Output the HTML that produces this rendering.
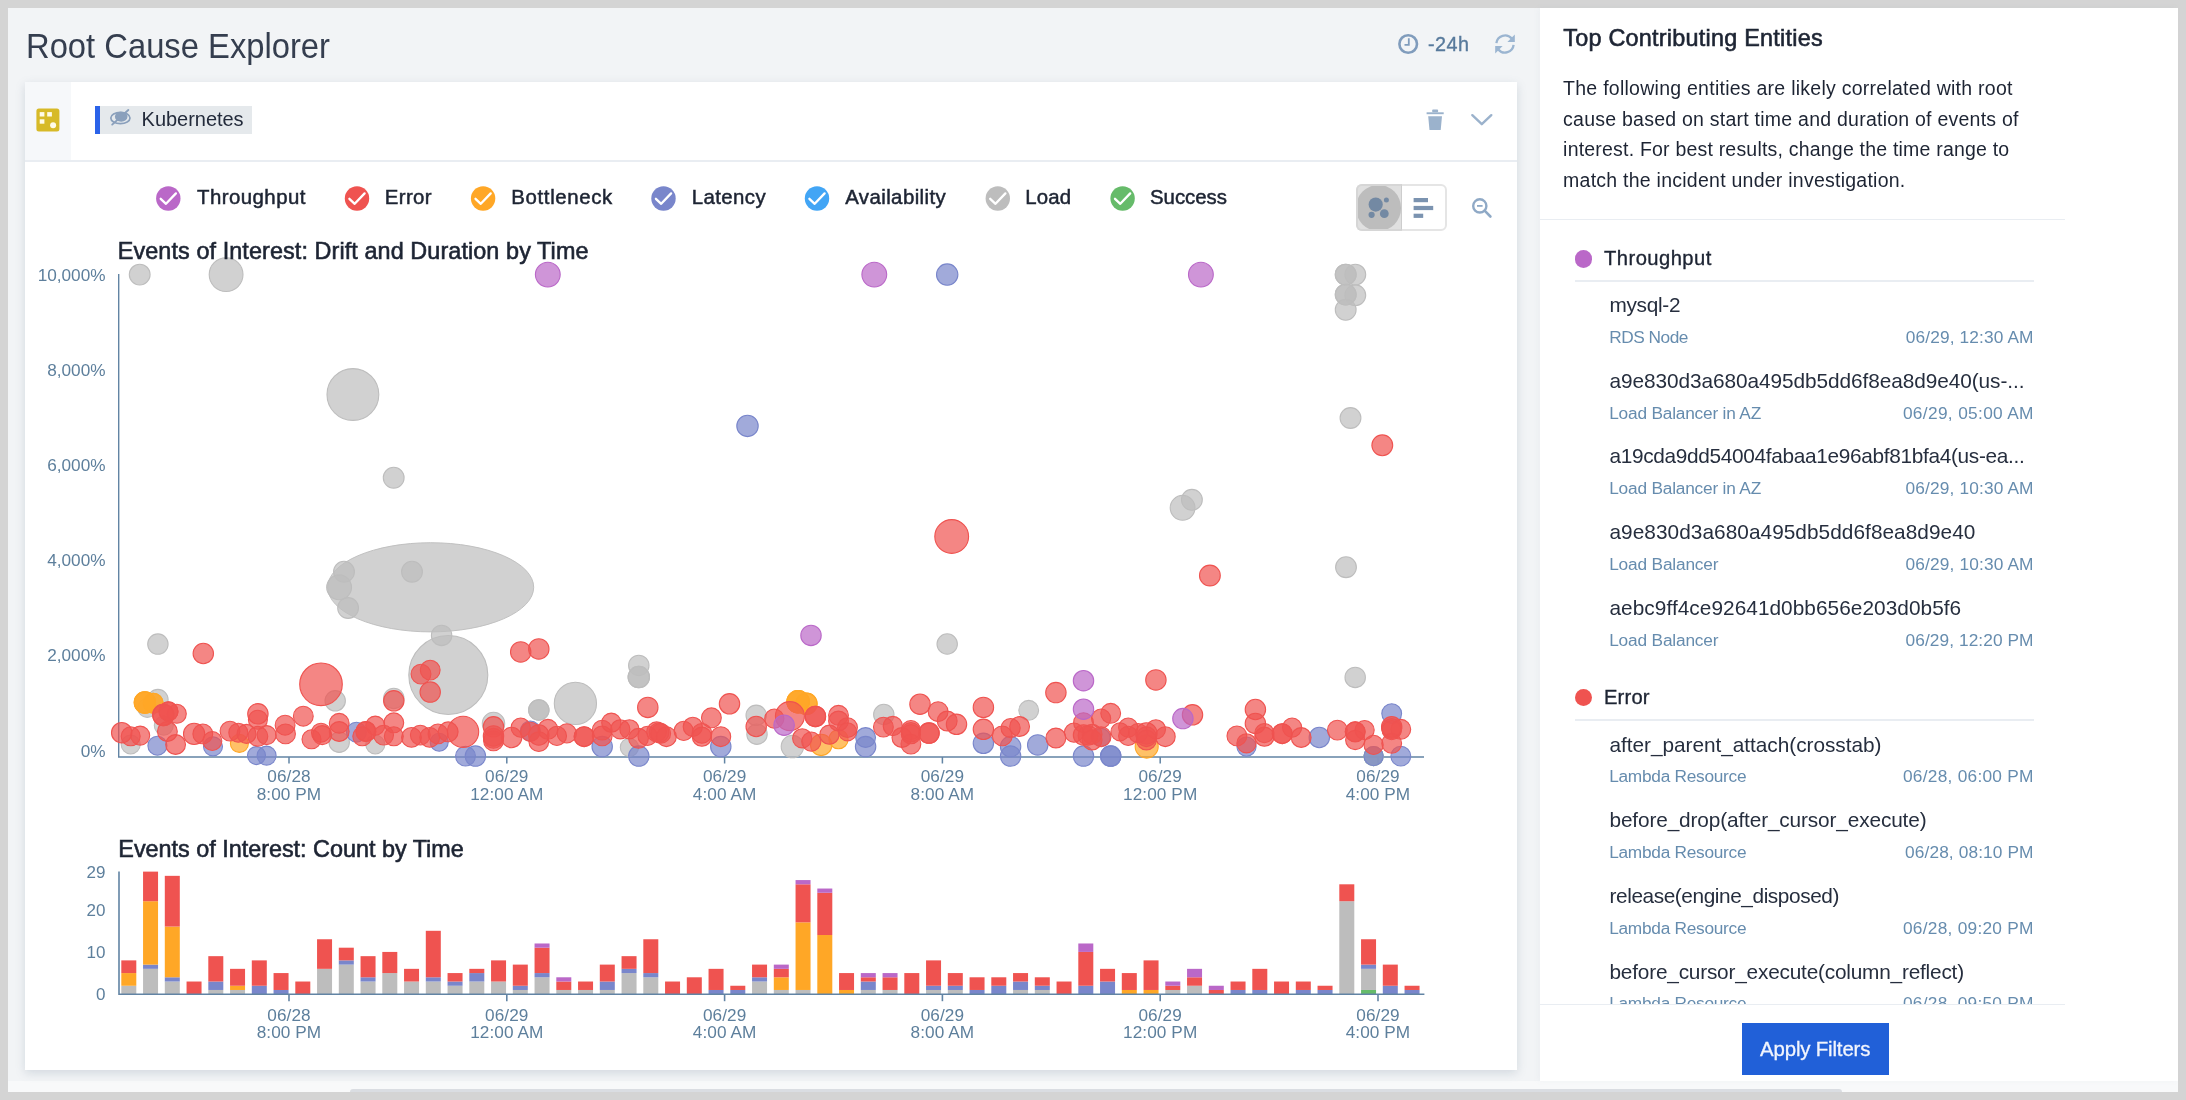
<!DOCTYPE html><html><head><meta charset="utf-8"><title>Root Cause Explorer</title><style>
html,body{margin:0;padding:0}
body{width:2186px;height:1100px;overflow:hidden;background:#d4d4d4;font-family:"Liberation Sans", sans-serif;position:relative}
.abs{position:absolute}
.t{position:absolute;white-space:pre;margin:0;padding:0}
#page{position:absolute;left:8px;top:8px;width:2170px;height:1073px;background:#f2f4f6;overflow:hidden}
#track{position:absolute;left:8px;top:1081px;width:2170px;height:11px;background:#f8f9fa}
</style></head><body>
<div id="layer" style="position:absolute;left:0;top:0;width:2186px;height:1100px;will-change:transform">
<div id="page"></div><div id="track"></div>
<div class="abs" style="left:25px;top:82px;width:1492px;height:987.7px;background:#fff;box-shadow:0 3px 9px rgba(110,130,150,0.24)"></div>
<div class="abs" style="left:25px;top:82px;width:46px;height:78px;background:#f6f8fa"></div>
<div class="abs" style="left:25px;top:159.5px;width:1492px;height:2px;background:#e9edf2"></div>
<div class="abs" style="left:94.6px;top:105.6px;width:157.3px;height:28.8px;background:#e5e9ec"></div>
<div class="abs" style="left:94.6px;top:105.6px;width:5.3px;height:28.8px;background:#2b63e9"></div>
<div class="abs" style="left:1540px;top:8px;width:638px;height:1072.5px;background:#fff;box-shadow:-2px 0 6px rgba(120,140,160,0.05)"></div>
<div class="abs" style="left:1540px;top:218.5px;width:525px;height:1.5px;background:#e9edf2"></div>
<div class="abs" style="left:1575px;top:279.6px;width:459px;height:2px;background:#e9edf2"></div>
<div class="abs" style="left:1575px;top:718.6px;width:459px;height:2px;background:#e9edf2"></div>
<div class="abs" style="left:1574.6px;top:250.2px;width:17.4px;height:17.4px;border-radius:50%;background:#ba68c8"></div>
<div class="abs" style="left:1574.6px;top:688.9px;width:17.4px;height:17.4px;border-radius:50%;background:#ef5350"></div>
<div class="abs" style="left:350px;top:1088.8px;width:1492px;height:3.2px;background:#dadde2;border-radius:4px 4px 0 0"></div>
<div class="abs" style="left:1355.5px;top:184.4px;width:91px;height:47px;box-sizing:border-box;border:2px solid #e5e5e5;border-radius:6px;background:#fff"></div>
<div class="abs" style="left:1355.5px;top:184.4px;width:46.5px;height:47px;box-sizing:border-box;border:2px solid #d6d6d6;border-right:1.5px solid #cdcdcd;border-radius:6px 0 0 6px;background:#e0e0e0;overflow:hidden"><div style="position:absolute;left:-1.7px;top:-1.2px;width:45.4px;height:45.4px;border-radius:50%;background:#bdbdbd"></div></div>
<svg class="abs" style="left:0;top:0" width="2186" height="1100" viewBox="0 0 2186 1100" font-family='"Liberation Sans", sans-serif'>
<path d="M118.7 274.1V757H1424" fill="none" stroke="#6284a4" stroke-width="1.4"/>
<path d="M289.0 757v6.5" stroke="#6284a4" stroke-width="1.5"/>
<path d="M506.8 757v6.5" stroke="#6284a4" stroke-width="1.5"/>
<path d="M724.6 757v6.5" stroke="#6284a4" stroke-width="1.5"/>
<path d="M942.4 757v6.5" stroke="#6284a4" stroke-width="1.5"/>
<path d="M1160.2 757v6.5" stroke="#6284a4" stroke-width="1.5"/>
<path d="M1378.0 757v6.5" stroke="#6284a4" stroke-width="1.5"/>
<text x="105.5" y="280.7" text-anchor="end" font-size="17.2" fill="#5d7f9c">10,000%</text>
<text x="105.5" y="375.7" text-anchor="end" font-size="17.2" fill="#5d7f9c">8,000%</text>
<text x="105.5" y="470.7" text-anchor="end" font-size="17.2" fill="#5d7f9c">6,000%</text>
<text x="105.5" y="565.7" text-anchor="end" font-size="17.2" fill="#5d7f9c">4,000%</text>
<text x="105.5" y="661.2" text-anchor="end" font-size="17.2" fill="#5d7f9c">2,000%</text>
<text x="105.5" y="756.7" text-anchor="end" font-size="17.2" fill="#5d7f9c">0%</text>
<text x="289.0" y="782.0" text-anchor="middle" font-size="17.2" letter-spacing="0.08" fill="#5d7f9c">06/28</text>
<text x="289.0" y="799.5" text-anchor="middle" font-size="17.2" letter-spacing="0.08" fill="#5d7f9c">8:00 PM</text>
<text x="289.0" y="1020.6" text-anchor="middle" font-size="17.2" letter-spacing="0.08" fill="#5d7f9c">06/28</text>
<text x="289.0" y="1037.7" text-anchor="middle" font-size="17.2" letter-spacing="0.08" fill="#5d7f9c">8:00 PM</text>
<text x="506.8" y="782.0" text-anchor="middle" font-size="17.2" letter-spacing="0.08" fill="#5d7f9c">06/29</text>
<text x="506.8" y="799.5" text-anchor="middle" font-size="17.2" letter-spacing="0.08" fill="#5d7f9c">12:00 AM</text>
<text x="506.8" y="1020.6" text-anchor="middle" font-size="17.2" letter-spacing="0.08" fill="#5d7f9c">06/29</text>
<text x="506.8" y="1037.7" text-anchor="middle" font-size="17.2" letter-spacing="0.08" fill="#5d7f9c">12:00 AM</text>
<text x="724.6" y="782.0" text-anchor="middle" font-size="17.2" letter-spacing="0.08" fill="#5d7f9c">06/29</text>
<text x="724.6" y="799.5" text-anchor="middle" font-size="17.2" letter-spacing="0.08" fill="#5d7f9c">4:00 AM</text>
<text x="724.6" y="1020.6" text-anchor="middle" font-size="17.2" letter-spacing="0.08" fill="#5d7f9c">06/29</text>
<text x="724.6" y="1037.7" text-anchor="middle" font-size="17.2" letter-spacing="0.08" fill="#5d7f9c">4:00 AM</text>
<text x="942.4" y="782.0" text-anchor="middle" font-size="17.2" letter-spacing="0.08" fill="#5d7f9c">06/29</text>
<text x="942.4" y="799.5" text-anchor="middle" font-size="17.2" letter-spacing="0.08" fill="#5d7f9c">8:00 AM</text>
<text x="942.4" y="1020.6" text-anchor="middle" font-size="17.2" letter-spacing="0.08" fill="#5d7f9c">06/29</text>
<text x="942.4" y="1037.7" text-anchor="middle" font-size="17.2" letter-spacing="0.08" fill="#5d7f9c">8:00 AM</text>
<text x="1160.2" y="782.0" text-anchor="middle" font-size="17.2" letter-spacing="0.08" fill="#5d7f9c">06/29</text>
<text x="1160.2" y="799.5" text-anchor="middle" font-size="17.2" letter-spacing="0.08" fill="#5d7f9c">12:00 PM</text>
<text x="1160.2" y="1020.6" text-anchor="middle" font-size="17.2" letter-spacing="0.08" fill="#5d7f9c">06/29</text>
<text x="1160.2" y="1037.7" text-anchor="middle" font-size="17.2" letter-spacing="0.08" fill="#5d7f9c">12:00 PM</text>
<text x="1378.0" y="782.0" text-anchor="middle" font-size="17.2" letter-spacing="0.08" fill="#5d7f9c">06/29</text>
<text x="1378.0" y="799.5" text-anchor="middle" font-size="17.2" letter-spacing="0.08" fill="#5d7f9c">4:00 PM</text>
<text x="1378.0" y="1020.6" text-anchor="middle" font-size="17.2" letter-spacing="0.08" fill="#5d7f9c">06/29</text>
<text x="1378.0" y="1037.7" text-anchor="middle" font-size="17.2" letter-spacing="0.08" fill="#5d7f9c">4:00 PM</text>
<circle cx="1373.6" cy="756.1" r="9.6" fill="#66bb6a" fill-opacity="0.7" stroke="#66bb6a" stroke-opacity="1.0" stroke-width="1.1"/>
<ellipse cx="430.7" cy="587.3" rx="103" ry="44.6" fill="#bdbdbd" fill-opacity="0.7" stroke="#bdbdbd" stroke-opacity="0.9"/>
<circle cx="448.3" cy="675.0" r="39.5" fill="#bdbdbd" fill-opacity="0.7" stroke="#bdbdbd" stroke-opacity="1.0" stroke-width="1.1"/>
<circle cx="157.9" cy="644.1" r="10.2" fill="#bdbdbd" fill-opacity="0.7" stroke="#bdbdbd" stroke-opacity="1.0" stroke-width="1.1"/>
<circle cx="157.9" cy="699.6" r="10.2" fill="#bdbdbd" fill-opacity="0.7" stroke="#bdbdbd" stroke-opacity="1.0" stroke-width="1.1"/>
<circle cx="147.3" cy="707.9" r="9.5" fill="#bdbdbd" fill-opacity="0.7" stroke="#bdbdbd" stroke-opacity="1.0" stroke-width="1.1"/>
<circle cx="130.7" cy="744.5" r="9.5" fill="#bdbdbd" fill-opacity="0.7" stroke="#bdbdbd" stroke-opacity="1.0" stroke-width="1.1"/>
<circle cx="335.2" cy="700.8" r="10.2" fill="#bdbdbd" fill-opacity="0.7" stroke="#bdbdbd" stroke-opacity="1.0" stroke-width="1.1"/>
<circle cx="339.2" cy="742.2" r="10.2" fill="#bdbdbd" fill-opacity="0.7" stroke="#bdbdbd" stroke-opacity="1.0" stroke-width="1.1"/>
<circle cx="375.3" cy="744.5" r="9.5" fill="#bdbdbd" fill-opacity="0.7" stroke="#bdbdbd" stroke-opacity="1.0" stroke-width="1.1"/>
<circle cx="393.8" cy="698.4" r="10.2" fill="#bdbdbd" fill-opacity="0.7" stroke="#bdbdbd" stroke-opacity="1.0" stroke-width="1.1"/>
<circle cx="163.8" cy="725.6" r="9.5" fill="#bdbdbd" fill-opacity="0.7" stroke="#bdbdbd" stroke-opacity="1.0" stroke-width="1.1"/>
<circle cx="441.6" cy="635.4" r="10.2" fill="#bdbdbd" fill-opacity="0.7" stroke="#bdbdbd" stroke-opacity="1.0" stroke-width="1.1"/>
<circle cx="493.5" cy="723.5" r="11.2" fill="#bdbdbd" fill-opacity="0.7" stroke="#bdbdbd" stroke-opacity="1.0" stroke-width="1.1"/>
<circle cx="538.8" cy="710.0" r="10.2" fill="#bdbdbd" fill-opacity="0.7" stroke="#bdbdbd" stroke-opacity="1.0" stroke-width="1.1"/>
<circle cx="575.4" cy="703.4" r="21.1" fill="#bdbdbd" fill-opacity="0.7" stroke="#bdbdbd" stroke-opacity="1.0" stroke-width="1.1"/>
<circle cx="638.8" cy="665.4" r="10.2" fill="#bdbdbd" fill-opacity="0.7" stroke="#bdbdbd" stroke-opacity="1.0" stroke-width="1.1"/>
<circle cx="638.8" cy="677.1" r="10.7" fill="#bdbdbd" fill-opacity="0.7" stroke="#bdbdbd" stroke-opacity="1.0" stroke-width="1.1"/>
<circle cx="629.4" cy="747.4" r="9.1" fill="#bdbdbd" fill-opacity="0.7" stroke="#bdbdbd" stroke-opacity="1.0" stroke-width="1.1"/>
<circle cx="756.2" cy="715.3" r="10.2" fill="#bdbdbd" fill-opacity="0.7" stroke="#bdbdbd" stroke-opacity="1.0" stroke-width="1.1"/>
<circle cx="757.0" cy="734.2" r="10.2" fill="#bdbdbd" fill-opacity="0.7" stroke="#bdbdbd" stroke-opacity="1.0" stroke-width="1.1"/>
<circle cx="947.2" cy="644.0" r="10.2" fill="#bdbdbd" fill-opacity="0.7" stroke="#bdbdbd" stroke-opacity="1.0" stroke-width="1.1"/>
<circle cx="883.8" cy="714.5" r="10.2" fill="#bdbdbd" fill-opacity="0.7" stroke="#bdbdbd" stroke-opacity="1.0" stroke-width="1.1"/>
<circle cx="1028.7" cy="710.3" r="9.9" fill="#bdbdbd" fill-opacity="0.7" stroke="#bdbdbd" stroke-opacity="1.0" stroke-width="1.1"/>
<circle cx="792.4" cy="746.6" r="11.2" fill="#bdbdbd" fill-opacity="0.7" stroke="#bdbdbd" stroke-opacity="1.0" stroke-width="1.1"/>
<circle cx="1355.2" cy="677.4" r="10.2" fill="#bdbdbd" fill-opacity="0.7" stroke="#bdbdbd" stroke-opacity="1.0" stroke-width="1.1"/>
<circle cx="1373.6" cy="756.1" r="9.6" fill="#bdbdbd" fill-opacity="0.7" stroke="#bdbdbd" stroke-opacity="1.0" stroke-width="1.1"/>
<circle cx="1345.7" cy="274.6" r="10.4" fill="#bdbdbd" fill-opacity="0.7" stroke="#bdbdbd" stroke-opacity="1.0" stroke-width="1.1"/>
<circle cx="1355.3" cy="274.6" r="10.4" fill="#bdbdbd" fill-opacity="0.7" stroke="#bdbdbd" stroke-opacity="1.0" stroke-width="1.1"/>
<circle cx="1345.7" cy="274.6" r="10.4" fill="#bdbdbd" fill-opacity="0.7" stroke="#bdbdbd" stroke-opacity="1.0" stroke-width="1.1"/>
<circle cx="1345.7" cy="294.6" r="10.4" fill="#bdbdbd" fill-opacity="0.7" stroke="#bdbdbd" stroke-opacity="1.0" stroke-width="1.1"/>
<circle cx="1355.3" cy="295.3" r="10.4" fill="#bdbdbd" fill-opacity="0.7" stroke="#bdbdbd" stroke-opacity="1.0" stroke-width="1.1"/>
<circle cx="1345.7" cy="294.6" r="10.4" fill="#bdbdbd" fill-opacity="0.7" stroke="#bdbdbd" stroke-opacity="1.0" stroke-width="1.1"/>
<circle cx="1345.7" cy="309.8" r="10.4" fill="#bdbdbd" fill-opacity="0.7" stroke="#bdbdbd" stroke-opacity="1.0" stroke-width="1.1"/>
<circle cx="1350.5" cy="418.0" r="10.4" fill="#bdbdbd" fill-opacity="0.7" stroke="#bdbdbd" stroke-opacity="1.0" stroke-width="1.1"/>
<circle cx="1191.9" cy="499.8" r="10.4" fill="#bdbdbd" fill-opacity="0.7" stroke="#bdbdbd" stroke-opacity="1.0" stroke-width="1.1"/>
<circle cx="1182.6" cy="507.8" r="12.4" fill="#bdbdbd" fill-opacity="0.7" stroke="#bdbdbd" stroke-opacity="1.0" stroke-width="1.1"/>
<circle cx="1346.0" cy="567.2" r="10.4" fill="#bdbdbd" fill-opacity="0.7" stroke="#bdbdbd" stroke-opacity="1.0" stroke-width="1.1"/>
<circle cx="139.7" cy="274.6" r="10.4" fill="#bdbdbd" fill-opacity="0.7" stroke="#bdbdbd" stroke-opacity="1.0" stroke-width="1.1"/>
<circle cx="226.1" cy="274.6" r="16.9" fill="#bdbdbd" fill-opacity="0.7" stroke="#bdbdbd" stroke-opacity="1.0" stroke-width="1.1"/>
<circle cx="352.9" cy="394.5" r="25.9" fill="#bdbdbd" fill-opacity="0.7" stroke="#bdbdbd" stroke-opacity="1.0" stroke-width="1.1"/>
<circle cx="393.7" cy="477.7" r="10.4" fill="#bdbdbd" fill-opacity="0.7" stroke="#bdbdbd" stroke-opacity="1.0" stroke-width="1.1"/>
<circle cx="344.0" cy="571.7" r="10.4" fill="#bdbdbd" fill-opacity="0.7" stroke="#bdbdbd" stroke-opacity="1.0" stroke-width="1.1"/>
<circle cx="339.1" cy="587.3" r="12.4" fill="#bdbdbd" fill-opacity="0.7" stroke="#bdbdbd" stroke-opacity="1.0" stroke-width="1.1"/>
<circle cx="348.1" cy="608.0" r="10.4" fill="#bdbdbd" fill-opacity="0.7" stroke="#bdbdbd" stroke-opacity="1.0" stroke-width="1.1"/>
<circle cx="412.0" cy="571.7" r="10.4" fill="#bdbdbd" fill-opacity="0.7" stroke="#bdbdbd" stroke-opacity="1.0" stroke-width="1.1"/>
<circle cx="538.8" cy="710.0" r="10.2" fill="#bdbdbd" fill-opacity="0.7" stroke="#bdbdbd" stroke-opacity="1.0" stroke-width="1.1"/>
<circle cx="638.8" cy="677.1" r="10.7" fill="#bdbdbd" fill-opacity="0.7" stroke="#bdbdbd" stroke-opacity="1.0" stroke-width="1.1"/>
<circle cx="157.4" cy="745.7" r="9.5" fill="#7986cb" fill-opacity="0.7" stroke="#7986cb" stroke-opacity="1.0" stroke-width="1.1"/>
<circle cx="213.0" cy="746.4" r="9.5" fill="#7986cb" fill-opacity="0.7" stroke="#7986cb" stroke-opacity="1.0" stroke-width="1.1"/>
<circle cx="256.5" cy="755.6" r="9.0" fill="#7986cb" fill-opacity="0.7" stroke="#7986cb" stroke-opacity="1.0" stroke-width="1.1"/>
<circle cx="266.6" cy="755.6" r="9.5" fill="#7986cb" fill-opacity="0.7" stroke="#7986cb" stroke-opacity="1.0" stroke-width="1.1"/>
<circle cx="356.4" cy="732.2" r="9.9" fill="#7986cb" fill-opacity="0.7" stroke="#7986cb" stroke-opacity="1.0" stroke-width="1.1"/>
<circle cx="439.2" cy="742.2" r="9.0" fill="#7986cb" fill-opacity="0.7" stroke="#7986cb" stroke-opacity="1.0" stroke-width="1.1"/>
<circle cx="465.5" cy="756.1" r="9.9" fill="#7986cb" fill-opacity="0.7" stroke="#7986cb" stroke-opacity="1.0" stroke-width="1.1"/>
<circle cx="475.4" cy="756.1" r="10.2" fill="#7986cb" fill-opacity="0.7" stroke="#7986cb" stroke-opacity="1.0" stroke-width="1.1"/>
<circle cx="530.3" cy="730.9" r="9.9" fill="#7986cb" fill-opacity="0.7" stroke="#7986cb" stroke-opacity="1.0" stroke-width="1.1"/>
<circle cx="602.2" cy="746.6" r="10.2" fill="#7986cb" fill-opacity="0.7" stroke="#7986cb" stroke-opacity="1.0" stroke-width="1.1"/>
<circle cx="638.8" cy="756.1" r="10.2" fill="#7986cb" fill-opacity="0.7" stroke="#7986cb" stroke-opacity="1.0" stroke-width="1.1"/>
<circle cx="720.8" cy="746.6" r="10.2" fill="#7986cb" fill-opacity="0.7" stroke="#7986cb" stroke-opacity="1.0" stroke-width="1.1"/>
<circle cx="865.6" cy="737.5" r="9.9" fill="#7986cb" fill-opacity="0.7" stroke="#7986cb" stroke-opacity="1.0" stroke-width="1.1"/>
<circle cx="865.6" cy="746.6" r="10.2" fill="#7986cb" fill-opacity="0.7" stroke="#7986cb" stroke-opacity="1.0" stroke-width="1.1"/>
<circle cx="983.4" cy="743.3" r="10.2" fill="#7986cb" fill-opacity="0.7" stroke="#7986cb" stroke-opacity="1.0" stroke-width="1.1"/>
<circle cx="1010.6" cy="746.6" r="10.2" fill="#7986cb" fill-opacity="0.7" stroke="#7986cb" stroke-opacity="1.0" stroke-width="1.1"/>
<circle cx="1010.6" cy="756.1" r="10.2" fill="#7986cb" fill-opacity="0.7" stroke="#7986cb" stroke-opacity="1.0" stroke-width="1.1"/>
<circle cx="1037.7" cy="744.9" r="10.2" fill="#7986cb" fill-opacity="0.7" stroke="#7986cb" stroke-opacity="1.0" stroke-width="1.1"/>
<circle cx="1083.5" cy="756.1" r="10.2" fill="#7986cb" fill-opacity="0.7" stroke="#7986cb" stroke-opacity="1.0" stroke-width="1.1"/>
<circle cx="1110.7" cy="756.1" r="10.2" fill="#7986cb" fill-opacity="0.7" stroke="#7986cb" stroke-opacity="1.0" stroke-width="1.1"/>
<circle cx="1101.1" cy="737.5" r="9.1" fill="#7986cb" fill-opacity="0.7" stroke="#7986cb" stroke-opacity="1.0" stroke-width="1.1"/>
<circle cx="1246.5" cy="746.6" r="9.6" fill="#7986cb" fill-opacity="0.7" stroke="#7986cb" stroke-opacity="1.0" stroke-width="1.1"/>
<circle cx="1319.3" cy="737.5" r="10.2" fill="#7986cb" fill-opacity="0.7" stroke="#7986cb" stroke-opacity="1.0" stroke-width="1.1"/>
<circle cx="1391.7" cy="713.6" r="9.9" fill="#7986cb" fill-opacity="0.7" stroke="#7986cb" stroke-opacity="1.0" stroke-width="1.1"/>
<circle cx="1400.8" cy="756.1" r="9.9" fill="#7986cb" fill-opacity="0.7" stroke="#7986cb" stroke-opacity="1.0" stroke-width="1.1"/>
<circle cx="1373.6" cy="756.1" r="9.6" fill="#7986cb" fill-opacity="0.7" stroke="#7986cb" stroke-opacity="1.0" stroke-width="1.1"/>
<circle cx="947.2" cy="274.6" r="10.7" fill="#7986cb" fill-opacity="0.7" stroke="#7986cb" stroke-opacity="1.0" stroke-width="1.1"/>
<circle cx="747.5" cy="425.9" r="10.7" fill="#7986cb" fill-opacity="0.7" stroke="#7986cb" stroke-opacity="1.0" stroke-width="1.1"/>
<circle cx="1110.7" cy="756.1" r="10.2" fill="#7986cb" fill-opacity="0.7" stroke="#7986cb" stroke-opacity="1.0" stroke-width="1.1"/>
<circle cx="144.9" cy="702.5" r="10.6" fill="#ffa726" fill-opacity="0.7" stroke="#ffa726" stroke-opacity="1.0" stroke-width="1.1"/>
<circle cx="153.2" cy="703.2" r="9.9" fill="#ffa726" fill-opacity="0.7" stroke="#ffa726" stroke-opacity="1.0" stroke-width="1.1"/>
<circle cx="144.9" cy="702.5" r="10.6" fill="#ffa726" fill-opacity="0.7" stroke="#ffa726" stroke-opacity="1.0" stroke-width="1.1"/>
<circle cx="153.2" cy="703.2" r="9.9" fill="#ffa726" fill-opacity="0.7" stroke="#ffa726" stroke-opacity="1.0" stroke-width="1.1"/>
<circle cx="144.9" cy="702.5" r="10.6" fill="#ffa726" fill-opacity="0.7" stroke="#ffa726" stroke-opacity="1.0" stroke-width="1.1"/>
<circle cx="239.4" cy="743.4" r="9.0" fill="#ffa726" fill-opacity="0.7" stroke="#ffa726" stroke-opacity="1.0" stroke-width="1.1"/>
<circle cx="798.1" cy="701.8" r="11.2" fill="#ffa726" fill-opacity="0.7" stroke="#ffa726" stroke-opacity="1.0" stroke-width="1.1"/>
<circle cx="806.4" cy="703.8" r="10.7" fill="#ffa726" fill-opacity="0.7" stroke="#ffa726" stroke-opacity="1.0" stroke-width="1.1"/>
<circle cx="798.1" cy="701.8" r="11.2" fill="#ffa726" fill-opacity="0.7" stroke="#ffa726" stroke-opacity="1.0" stroke-width="1.1"/>
<circle cx="806.4" cy="703.8" r="10.7" fill="#ffa726" fill-opacity="0.7" stroke="#ffa726" stroke-opacity="1.0" stroke-width="1.1"/>
<circle cx="798.1" cy="701.8" r="11.2" fill="#ffa726" fill-opacity="0.7" stroke="#ffa726" stroke-opacity="1.0" stroke-width="1.1"/>
<circle cx="821.2" cy="744.9" r="10.7" fill="#ffa726" fill-opacity="0.7" stroke="#ffa726" stroke-opacity="1.0" stroke-width="1.1"/>
<circle cx="838.5" cy="739.2" r="9.6" fill="#ffa726" fill-opacity="0.7" stroke="#ffa726" stroke-opacity="1.0" stroke-width="1.1"/>
<circle cx="1146.7" cy="746.6" r="11.5" fill="#ffa726" fill-opacity="0.7" stroke="#ffa726" stroke-opacity="1.0" stroke-width="1.1"/>
<circle cx="203.3" cy="653.5" r="10.2" fill="#ef5350" fill-opacity="0.7" stroke="#ef5350" stroke-opacity="1.0" stroke-width="1.1"/>
<circle cx="321.0" cy="684.3" r="21.3" fill="#ef5350" fill-opacity="0.7" stroke="#ef5350" stroke-opacity="1.0" stroke-width="1.1"/>
<circle cx="121.7" cy="732.7" r="10.2" fill="#ef5350" fill-opacity="0.7" stroke="#ef5350" stroke-opacity="1.0" stroke-width="1.1"/>
<circle cx="130.7" cy="736.3" r="9.5" fill="#ef5350" fill-opacity="0.7" stroke="#ef5350" stroke-opacity="1.0" stroke-width="1.1"/>
<circle cx="140.2" cy="735.6" r="9.5" fill="#ef5350" fill-opacity="0.7" stroke="#ef5350" stroke-opacity="1.0" stroke-width="1.1"/>
<circle cx="163.3" cy="715.0" r="10.6" fill="#ef5350" fill-opacity="0.7" stroke="#ef5350" stroke-opacity="1.0" stroke-width="1.1"/>
<circle cx="168.5" cy="711.4" r="9.5" fill="#ef5350" fill-opacity="0.7" stroke="#ef5350" stroke-opacity="1.0" stroke-width="1.1"/>
<circle cx="176.8" cy="713.8" r="9.5" fill="#ef5350" fill-opacity="0.7" stroke="#ef5350" stroke-opacity="1.0" stroke-width="1.1"/>
<circle cx="167.4" cy="731.5" r="9.9" fill="#ef5350" fill-opacity="0.7" stroke="#ef5350" stroke-opacity="1.0" stroke-width="1.1"/>
<circle cx="175.6" cy="744.5" r="9.9" fill="#ef5350" fill-opacity="0.7" stroke="#ef5350" stroke-opacity="1.0" stroke-width="1.1"/>
<circle cx="194.1" cy="733.9" r="10.6" fill="#ef5350" fill-opacity="0.7" stroke="#ef5350" stroke-opacity="1.0" stroke-width="1.1"/>
<circle cx="202.8" cy="733.9" r="9.9" fill="#ef5350" fill-opacity="0.7" stroke="#ef5350" stroke-opacity="1.0" stroke-width="1.1"/>
<circle cx="212.3" cy="741.0" r="9.5" fill="#ef5350" fill-opacity="0.7" stroke="#ef5350" stroke-opacity="1.0" stroke-width="1.1"/>
<circle cx="230.0" cy="731.1" r="9.9" fill="#ef5350" fill-opacity="0.7" stroke="#ef5350" stroke-opacity="1.0" stroke-width="1.1"/>
<circle cx="238.3" cy="732.7" r="9.5" fill="#ef5350" fill-opacity="0.7" stroke="#ef5350" stroke-opacity="1.0" stroke-width="1.1"/>
<circle cx="246.5" cy="733.9" r="9.5" fill="#ef5350" fill-opacity="0.7" stroke="#ef5350" stroke-opacity="1.0" stroke-width="1.1"/>
<circle cx="257.9" cy="713.8" r="10.2" fill="#ef5350" fill-opacity="0.7" stroke="#ef5350" stroke-opacity="1.0" stroke-width="1.1"/>
<circle cx="257.9" cy="719.7" r="9.5" fill="#ef5350" fill-opacity="0.7" stroke="#ef5350" stroke-opacity="1.0" stroke-width="1.1"/>
<circle cx="257.9" cy="736.3" r="9.9" fill="#ef5350" fill-opacity="0.7" stroke="#ef5350" stroke-opacity="1.0" stroke-width="1.1"/>
<circle cx="266.6" cy="735.1" r="9.5" fill="#ef5350" fill-opacity="0.7" stroke="#ef5350" stroke-opacity="1.0" stroke-width="1.1"/>
<circle cx="285.1" cy="725.2" r="9.9" fill="#ef5350" fill-opacity="0.7" stroke="#ef5350" stroke-opacity="1.0" stroke-width="1.1"/>
<circle cx="285.5" cy="733.9" r="9.9" fill="#ef5350" fill-opacity="0.7" stroke="#ef5350" stroke-opacity="1.0" stroke-width="1.1"/>
<circle cx="303.3" cy="716.2" r="9.9" fill="#ef5350" fill-opacity="0.7" stroke="#ef5350" stroke-opacity="1.0" stroke-width="1.1"/>
<circle cx="311.5" cy="739.3" r="9.5" fill="#ef5350" fill-opacity="0.7" stroke="#ef5350" stroke-opacity="1.0" stroke-width="1.1"/>
<circle cx="321.0" cy="732.7" r="9.5" fill="#ef5350" fill-opacity="0.7" stroke="#ef5350" stroke-opacity="1.0" stroke-width="1.1"/>
<circle cx="322.2" cy="735.1" r="9.5" fill="#ef5350" fill-opacity="0.7" stroke="#ef5350" stroke-opacity="1.0" stroke-width="1.1"/>
<circle cx="339.2" cy="723.3" r="9.9" fill="#ef5350" fill-opacity="0.7" stroke="#ef5350" stroke-opacity="1.0" stroke-width="1.1"/>
<circle cx="339.2" cy="731.5" r="9.9" fill="#ef5350" fill-opacity="0.7" stroke="#ef5350" stroke-opacity="1.0" stroke-width="1.1"/>
<circle cx="365.9" cy="731.5" r="9.9" fill="#ef5350" fill-opacity="0.7" stroke="#ef5350" stroke-opacity="1.0" stroke-width="1.1"/>
<circle cx="362.3" cy="736.3" r="9.5" fill="#ef5350" fill-opacity="0.7" stroke="#ef5350" stroke-opacity="1.0" stroke-width="1.1"/>
<circle cx="375.3" cy="725.6" r="9.5" fill="#ef5350" fill-opacity="0.7" stroke="#ef5350" stroke-opacity="1.0" stroke-width="1.1"/>
<circle cx="383.6" cy="735.1" r="9.9" fill="#ef5350" fill-opacity="0.7" stroke="#ef5350" stroke-opacity="1.0" stroke-width="1.1"/>
<circle cx="393.8" cy="700.8" r="10.2" fill="#ef5350" fill-opacity="0.7" stroke="#ef5350" stroke-opacity="1.0" stroke-width="1.1"/>
<circle cx="393.8" cy="722.8" r="9.9" fill="#ef5350" fill-opacity="0.7" stroke="#ef5350" stroke-opacity="1.0" stroke-width="1.1"/>
<circle cx="393.8" cy="736.3" r="9.5" fill="#ef5350" fill-opacity="0.7" stroke="#ef5350" stroke-opacity="1.0" stroke-width="1.1"/>
<circle cx="411.5" cy="737.4" r="9.9" fill="#ef5350" fill-opacity="0.7" stroke="#ef5350" stroke-opacity="1.0" stroke-width="1.1"/>
<circle cx="420.3" cy="735.1" r="9.9" fill="#ef5350" fill-opacity="0.7" stroke="#ef5350" stroke-opacity="1.0" stroke-width="1.1"/>
<circle cx="429.7" cy="737.4" r="9.9" fill="#ef5350" fill-opacity="0.7" stroke="#ef5350" stroke-opacity="1.0" stroke-width="1.1"/>
<circle cx="438.0" cy="733.9" r="9.9" fill="#ef5350" fill-opacity="0.7" stroke="#ef5350" stroke-opacity="1.0" stroke-width="1.1"/>
<circle cx="421.0" cy="674.1" r="9.9" fill="#ef5350" fill-opacity="0.7" stroke="#ef5350" stroke-opacity="1.0" stroke-width="1.1"/>
<circle cx="430.2" cy="670.1" r="9.9" fill="#ef5350" fill-opacity="0.7" stroke="#ef5350" stroke-opacity="1.0" stroke-width="1.1"/>
<circle cx="430.2" cy="692.1" r="10.2" fill="#ef5350" fill-opacity="0.7" stroke="#ef5350" stroke-opacity="1.0" stroke-width="1.1"/>
<circle cx="520.7" cy="651.9" r="10.2" fill="#ef5350" fill-opacity="0.7" stroke="#ef5350" stroke-opacity="1.0" stroke-width="1.1"/>
<circle cx="538.8" cy="648.9" r="10.2" fill="#ef5350" fill-opacity="0.7" stroke="#ef5350" stroke-opacity="1.0" stroke-width="1.1"/>
<circle cx="647.8" cy="707.4" r="10.2" fill="#ef5350" fill-opacity="0.7" stroke="#ef5350" stroke-opacity="1.0" stroke-width="1.1"/>
<circle cx="729.5" cy="703.8" r="10.2" fill="#ef5350" fill-opacity="0.7" stroke="#ef5350" stroke-opacity="1.0" stroke-width="1.1"/>
<circle cx="711.4" cy="717.8" r="9.9" fill="#ef5350" fill-opacity="0.7" stroke="#ef5350" stroke-opacity="1.0" stroke-width="1.1"/>
<circle cx="463.1" cy="731.8" r="15.6" fill="#ef5350" fill-opacity="0.7" stroke="#ef5350" stroke-opacity="1.0" stroke-width="1.1"/>
<circle cx="448.2" cy="731.8" r="9.9" fill="#ef5350" fill-opacity="0.7" stroke="#ef5350" stroke-opacity="1.0" stroke-width="1.1"/>
<circle cx="493.5" cy="726.8" r="10.2" fill="#ef5350" fill-opacity="0.7" stroke="#ef5350" stroke-opacity="1.0" stroke-width="1.1"/>
<circle cx="493.5" cy="735.9" r="10.2" fill="#ef5350" fill-opacity="0.7" stroke="#ef5350" stroke-opacity="1.0" stroke-width="1.1"/>
<circle cx="493.5" cy="740.8" r="9.9" fill="#ef5350" fill-opacity="0.7" stroke="#ef5350" stroke-opacity="1.0" stroke-width="1.1"/>
<circle cx="511.6" cy="737.5" r="10.2" fill="#ef5350" fill-opacity="0.7" stroke="#ef5350" stroke-opacity="1.0" stroke-width="1.1"/>
<circle cx="520.7" cy="727.6" r="9.6" fill="#ef5350" fill-opacity="0.7" stroke="#ef5350" stroke-opacity="1.0" stroke-width="1.1"/>
<circle cx="530.3" cy="731.8" r="9.6" fill="#ef5350" fill-opacity="0.7" stroke="#ef5350" stroke-opacity="1.0" stroke-width="1.1"/>
<circle cx="538.8" cy="735.0" r="10.2" fill="#ef5350" fill-opacity="0.7" stroke="#ef5350" stroke-opacity="1.0" stroke-width="1.1"/>
<circle cx="538.8" cy="741.6" r="9.9" fill="#ef5350" fill-opacity="0.7" stroke="#ef5350" stroke-opacity="1.0" stroke-width="1.1"/>
<circle cx="547.9" cy="729.3" r="9.9" fill="#ef5350" fill-opacity="0.7" stroke="#ef5350" stroke-opacity="1.0" stroke-width="1.1"/>
<circle cx="556.9" cy="735.9" r="9.6" fill="#ef5350" fill-opacity="0.7" stroke="#ef5350" stroke-opacity="1.0" stroke-width="1.1"/>
<circle cx="566.8" cy="733.4" r="9.6" fill="#ef5350" fill-opacity="0.7" stroke="#ef5350" stroke-opacity="1.0" stroke-width="1.1"/>
<circle cx="584.1" cy="736.7" r="9.9" fill="#ef5350" fill-opacity="0.7" stroke="#ef5350" stroke-opacity="1.0" stroke-width="1.1"/>
<circle cx="602.2" cy="730.1" r="9.9" fill="#ef5350" fill-opacity="0.7" stroke="#ef5350" stroke-opacity="1.0" stroke-width="1.1"/>
<circle cx="602.2" cy="735.9" r="9.9" fill="#ef5350" fill-opacity="0.7" stroke="#ef5350" stroke-opacity="1.0" stroke-width="1.1"/>
<circle cx="611.3" cy="722.7" r="9.6" fill="#ef5350" fill-opacity="0.7" stroke="#ef5350" stroke-opacity="1.0" stroke-width="1.1"/>
<circle cx="620.3" cy="729.3" r="9.6" fill="#ef5350" fill-opacity="0.7" stroke="#ef5350" stroke-opacity="1.0" stroke-width="1.1"/>
<circle cx="629.4" cy="729.3" r="9.6" fill="#ef5350" fill-opacity="0.7" stroke="#ef5350" stroke-opacity="1.0" stroke-width="1.1"/>
<circle cx="638.5" cy="738.3" r="9.9" fill="#ef5350" fill-opacity="0.7" stroke="#ef5350" stroke-opacity="1.0" stroke-width="1.1"/>
<circle cx="647.5" cy="735.9" r="9.6" fill="#ef5350" fill-opacity="0.7" stroke="#ef5350" stroke-opacity="1.0" stroke-width="1.1"/>
<circle cx="656.6" cy="731.8" r="9.9" fill="#ef5350" fill-opacity="0.7" stroke="#ef5350" stroke-opacity="1.0" stroke-width="1.1"/>
<circle cx="660.7" cy="733.4" r="9.9" fill="#ef5350" fill-opacity="0.7" stroke="#ef5350" stroke-opacity="1.0" stroke-width="1.1"/>
<circle cx="666.4" cy="736.7" r="9.9" fill="#ef5350" fill-opacity="0.7" stroke="#ef5350" stroke-opacity="1.0" stroke-width="1.1"/>
<circle cx="683.7" cy="730.9" r="9.6" fill="#ef5350" fill-opacity="0.7" stroke="#ef5350" stroke-opacity="1.0" stroke-width="1.1"/>
<circle cx="692.8" cy="726.8" r="9.6" fill="#ef5350" fill-opacity="0.7" stroke="#ef5350" stroke-opacity="1.0" stroke-width="1.1"/>
<circle cx="701.9" cy="733.4" r="9.9" fill="#ef5350" fill-opacity="0.7" stroke="#ef5350" stroke-opacity="1.0" stroke-width="1.1"/>
<circle cx="701.9" cy="736.7" r="9.6" fill="#ef5350" fill-opacity="0.7" stroke="#ef5350" stroke-opacity="1.0" stroke-width="1.1"/>
<circle cx="720.8" cy="736.7" r="9.9" fill="#ef5350" fill-opacity="0.7" stroke="#ef5350" stroke-opacity="1.0" stroke-width="1.1"/>
<circle cx="756.2" cy="726.5" r="10.2" fill="#ef5350" fill-opacity="0.7" stroke="#ef5350" stroke-opacity="1.0" stroke-width="1.1"/>
<circle cx="774.3" cy="718.6" r="9.6" fill="#ef5350" fill-opacity="0.7" stroke="#ef5350" stroke-opacity="1.0" stroke-width="1.1"/>
<circle cx="789.9" cy="716.1" r="14.5" fill="#ef5350" fill-opacity="0.7" stroke="#ef5350" stroke-opacity="1.0" stroke-width="1.1"/>
<circle cx="815.4" cy="716.4" r="10.2" fill="#ef5350" fill-opacity="0.7" stroke="#ef5350" stroke-opacity="1.0" stroke-width="1.1"/>
<circle cx="838.5" cy="715.3" r="9.9" fill="#ef5350" fill-opacity="0.7" stroke="#ef5350" stroke-opacity="1.0" stroke-width="1.1"/>
<circle cx="838.5" cy="721.0" r="9.9" fill="#ef5350" fill-opacity="0.7" stroke="#ef5350" stroke-opacity="1.0" stroke-width="1.1"/>
<circle cx="847.5" cy="727.6" r="9.9" fill="#ef5350" fill-opacity="0.7" stroke="#ef5350" stroke-opacity="1.0" stroke-width="1.1"/>
<circle cx="847.5" cy="731.8" r="9.1" fill="#ef5350" fill-opacity="0.7" stroke="#ef5350" stroke-opacity="1.0" stroke-width="1.1"/>
<circle cx="829.4" cy="734.7" r="9.6" fill="#ef5350" fill-opacity="0.7" stroke="#ef5350" stroke-opacity="1.0" stroke-width="1.1"/>
<circle cx="802.2" cy="738.3" r="9.6" fill="#ef5350" fill-opacity="0.7" stroke="#ef5350" stroke-opacity="1.0" stroke-width="1.1"/>
<circle cx="811.3" cy="741.6" r="9.6" fill="#ef5350" fill-opacity="0.7" stroke="#ef5350" stroke-opacity="1.0" stroke-width="1.1"/>
<circle cx="883.4" cy="727.1" r="9.9" fill="#ef5350" fill-opacity="0.7" stroke="#ef5350" stroke-opacity="1.0" stroke-width="1.1"/>
<circle cx="892.8" cy="726.0" r="9.6" fill="#ef5350" fill-opacity="0.7" stroke="#ef5350" stroke-opacity="1.0" stroke-width="1.1"/>
<circle cx="901.9" cy="737.5" r="9.9" fill="#ef5350" fill-opacity="0.7" stroke="#ef5350" stroke-opacity="1.0" stroke-width="1.1"/>
<circle cx="910.9" cy="730.1" r="9.6" fill="#ef5350" fill-opacity="0.7" stroke="#ef5350" stroke-opacity="1.0" stroke-width="1.1"/>
<circle cx="910.9" cy="734.2" r="9.6" fill="#ef5350" fill-opacity="0.7" stroke="#ef5350" stroke-opacity="1.0" stroke-width="1.1"/>
<circle cx="910.9" cy="744.1" r="9.9" fill="#ef5350" fill-opacity="0.7" stroke="#ef5350" stroke-opacity="1.0" stroke-width="1.1"/>
<circle cx="929.0" cy="733.1" r="10.2" fill="#ef5350" fill-opacity="0.7" stroke="#ef5350" stroke-opacity="1.0" stroke-width="1.1"/>
<circle cx="920.0" cy="704.2" r="10.2" fill="#ef5350" fill-opacity="0.7" stroke="#ef5350" stroke-opacity="1.0" stroke-width="1.1"/>
<circle cx="938.1" cy="711.7" r="9.9" fill="#ef5350" fill-opacity="0.7" stroke="#ef5350" stroke-opacity="1.0" stroke-width="1.1"/>
<circle cx="947.2" cy="721.0" r="9.9" fill="#ef5350" fill-opacity="0.7" stroke="#ef5350" stroke-opacity="1.0" stroke-width="1.1"/>
<circle cx="956.5" cy="724.3" r="10.2" fill="#ef5350" fill-opacity="0.7" stroke="#ef5350" stroke-opacity="1.0" stroke-width="1.1"/>
<circle cx="983.4" cy="707.4" r="10.2" fill="#ef5350" fill-opacity="0.7" stroke="#ef5350" stroke-opacity="1.0" stroke-width="1.1"/>
<circle cx="983.4" cy="729.3" r="10.2" fill="#ef5350" fill-opacity="0.7" stroke="#ef5350" stroke-opacity="1.0" stroke-width="1.1"/>
<circle cx="1002.3" cy="735.9" r="9.9" fill="#ef5350" fill-opacity="0.7" stroke="#ef5350" stroke-opacity="1.0" stroke-width="1.1"/>
<circle cx="1010.6" cy="728.1" r="9.6" fill="#ef5350" fill-opacity="0.7" stroke="#ef5350" stroke-opacity="1.0" stroke-width="1.1"/>
<circle cx="1019.6" cy="726.5" r="9.9" fill="#ef5350" fill-opacity="0.7" stroke="#ef5350" stroke-opacity="1.0" stroke-width="1.1"/>
<circle cx="1055.9" cy="692.6" r="10.2" fill="#ef5350" fill-opacity="0.7" stroke="#ef5350" stroke-opacity="1.0" stroke-width="1.1"/>
<circle cx="1055.9" cy="738.0" r="9.9" fill="#ef5350" fill-opacity="0.7" stroke="#ef5350" stroke-opacity="1.0" stroke-width="1.1"/>
<circle cx="1074.0" cy="732.6" r="9.6" fill="#ef5350" fill-opacity="0.7" stroke="#ef5350" stroke-opacity="1.0" stroke-width="1.1"/>
<circle cx="1083.5" cy="722.7" r="9.9" fill="#ef5350" fill-opacity="0.7" stroke="#ef5350" stroke-opacity="1.0" stroke-width="1.1"/>
<circle cx="1083.5" cy="735.0" r="10.2" fill="#ef5350" fill-opacity="0.7" stroke="#ef5350" stroke-opacity="1.0" stroke-width="1.1"/>
<circle cx="1092.1" cy="734.2" r="9.9" fill="#ef5350" fill-opacity="0.7" stroke="#ef5350" stroke-opacity="1.0" stroke-width="1.1"/>
<circle cx="1092.1" cy="740.0" r="9.9" fill="#ef5350" fill-opacity="0.7" stroke="#ef5350" stroke-opacity="1.0" stroke-width="1.1"/>
<circle cx="1101.1" cy="736.7" r="9.9" fill="#ef5350" fill-opacity="0.7" stroke="#ef5350" stroke-opacity="1.0" stroke-width="1.1"/>
<circle cx="1101.1" cy="718.6" r="9.6" fill="#ef5350" fill-opacity="0.7" stroke="#ef5350" stroke-opacity="1.0" stroke-width="1.1"/>
<circle cx="1110.7" cy="713.3" r="9.9" fill="#ef5350" fill-opacity="0.7" stroke="#ef5350" stroke-opacity="1.0" stroke-width="1.1"/>
<circle cx="1155.9" cy="679.9" r="10.2" fill="#ef5350" fill-opacity="0.7" stroke="#ef5350" stroke-opacity="1.0" stroke-width="1.1"/>
<circle cx="1192.5" cy="714.8" r="10.2" fill="#ef5350" fill-opacity="0.7" stroke="#ef5350" stroke-opacity="1.0" stroke-width="1.1"/>
<circle cx="1255.4" cy="709.5" r="10.2" fill="#ef5350" fill-opacity="0.7" stroke="#ef5350" stroke-opacity="1.0" stroke-width="1.1"/>
<circle cx="1255.4" cy="723.5" r="10.2" fill="#ef5350" fill-opacity="0.7" stroke="#ef5350" stroke-opacity="1.0" stroke-width="1.1"/>
<circle cx="1236.9" cy="735.9" r="9.9" fill="#ef5350" fill-opacity="0.7" stroke="#ef5350" stroke-opacity="1.0" stroke-width="1.1"/>
<circle cx="1246.5" cy="743.3" r="9.6" fill="#ef5350" fill-opacity="0.7" stroke="#ef5350" stroke-opacity="1.0" stroke-width="1.1"/>
<circle cx="1264.4" cy="733.1" r="9.6" fill="#ef5350" fill-opacity="0.7" stroke="#ef5350" stroke-opacity="1.0" stroke-width="1.1"/>
<circle cx="1264.4" cy="736.7" r="9.6" fill="#ef5350" fill-opacity="0.7" stroke="#ef5350" stroke-opacity="1.0" stroke-width="1.1"/>
<circle cx="1282.2" cy="733.7" r="9.9" fill="#ef5350" fill-opacity="0.7" stroke="#ef5350" stroke-opacity="1.0" stroke-width="1.1"/>
<circle cx="1292.1" cy="727.6" r="9.6" fill="#ef5350" fill-opacity="0.7" stroke="#ef5350" stroke-opacity="1.0" stroke-width="1.1"/>
<circle cx="1301.2" cy="737.5" r="9.9" fill="#ef5350" fill-opacity="0.7" stroke="#ef5350" stroke-opacity="1.0" stroke-width="1.1"/>
<circle cx="1337.4" cy="730.1" r="9.9" fill="#ef5350" fill-opacity="0.7" stroke="#ef5350" stroke-opacity="1.0" stroke-width="1.1"/>
<circle cx="1355.2" cy="731.8" r="9.9" fill="#ef5350" fill-opacity="0.7" stroke="#ef5350" stroke-opacity="1.0" stroke-width="1.1"/>
<circle cx="1355.2" cy="740.0" r="9.6" fill="#ef5350" fill-opacity="0.7" stroke="#ef5350" stroke-opacity="1.0" stroke-width="1.1"/>
<circle cx="1364.6" cy="730.1" r="9.6" fill="#ef5350" fill-opacity="0.7" stroke="#ef5350" stroke-opacity="1.0" stroke-width="1.1"/>
<circle cx="1373.6" cy="744.9" r="9.6" fill="#ef5350" fill-opacity="0.7" stroke="#ef5350" stroke-opacity="1.0" stroke-width="1.1"/>
<circle cx="1391.7" cy="726.8" r="10.2" fill="#ef5350" fill-opacity="0.7" stroke="#ef5350" stroke-opacity="1.0" stroke-width="1.1"/>
<circle cx="1391.7" cy="730.1" r="9.6" fill="#ef5350" fill-opacity="0.7" stroke="#ef5350" stroke-opacity="1.0" stroke-width="1.1"/>
<circle cx="1391.7" cy="743.3" r="9.9" fill="#ef5350" fill-opacity="0.7" stroke="#ef5350" stroke-opacity="1.0" stroke-width="1.1"/>
<circle cx="1400.8" cy="729.3" r="9.9" fill="#ef5350" fill-opacity="0.7" stroke="#ef5350" stroke-opacity="1.0" stroke-width="1.1"/>
<circle cx="1128.2" cy="727.6" r="9.6" fill="#ef5350" fill-opacity="0.7" stroke="#ef5350" stroke-opacity="1.0" stroke-width="1.1"/>
<circle cx="1128.2" cy="735.9" r="9.6" fill="#ef5350" fill-opacity="0.7" stroke="#ef5350" stroke-opacity="1.0" stroke-width="1.1"/>
<circle cx="1138.1" cy="733.1" r="9.6" fill="#ef5350" fill-opacity="0.7" stroke="#ef5350" stroke-opacity="1.0" stroke-width="1.1"/>
<circle cx="1146.4" cy="733.4" r="10.7" fill="#ef5350" fill-opacity="0.7" stroke="#ef5350" stroke-opacity="1.0" stroke-width="1.1"/>
<circle cx="1146.4" cy="740.0" r="9.9" fill="#ef5350" fill-opacity="0.7" stroke="#ef5350" stroke-opacity="1.0" stroke-width="1.1"/>
<circle cx="1155.9" cy="729.3" r="9.6" fill="#ef5350" fill-opacity="0.7" stroke="#ef5350" stroke-opacity="1.0" stroke-width="1.1"/>
<circle cx="1165.3" cy="736.7" r="9.9" fill="#ef5350" fill-opacity="0.7" stroke="#ef5350" stroke-opacity="1.0" stroke-width="1.1"/>
<circle cx="1120.0" cy="731.8" r="9.1" fill="#ef5350" fill-opacity="0.7" stroke="#ef5350" stroke-opacity="1.0" stroke-width="1.1"/>
<circle cx="1382.3" cy="445.3" r="10.4" fill="#ef5350" fill-opacity="0.7" stroke="#ef5350" stroke-opacity="1.0" stroke-width="1.1"/>
<circle cx="951.7" cy="536.5" r="16.9" fill="#ef5350" fill-opacity="0.7" stroke="#ef5350" stroke-opacity="1.0" stroke-width="1.1"/>
<circle cx="1209.9" cy="575.5" r="10.4" fill="#ef5350" fill-opacity="0.7" stroke="#ef5350" stroke-opacity="1.0" stroke-width="1.1"/>
<circle cx="815.4" cy="716.4" r="10.2" fill="#ef5350" fill-opacity="0.7" stroke="#ef5350" stroke-opacity="1.0" stroke-width="1.1"/>
<circle cx="929.0" cy="733.1" r="10.2" fill="#ef5350" fill-opacity="0.7" stroke="#ef5350" stroke-opacity="1.0" stroke-width="1.1"/>
<circle cx="1088.0" cy="735.4" r="9.9" fill="#ef5350" fill-opacity="0.7" stroke="#ef5350" stroke-opacity="1.0" stroke-width="1.1"/>
<circle cx="910.9" cy="732.2" r="9.6" fill="#ef5350" fill-opacity="0.7" stroke="#ef5350" stroke-opacity="1.0" stroke-width="1.1"/>
<circle cx="1282.2" cy="733.7" r="9.9" fill="#ef5350" fill-opacity="0.7" stroke="#ef5350" stroke-opacity="1.0" stroke-width="1.1"/>
<circle cx="1355.2" cy="731.8" r="9.9" fill="#ef5350" fill-opacity="0.7" stroke="#ef5350" stroke-opacity="1.0" stroke-width="1.1"/>
<circle cx="1391.7" cy="728.5" r="9.9" fill="#ef5350" fill-opacity="0.7" stroke="#ef5350" stroke-opacity="1.0" stroke-width="1.1"/>
<circle cx="1146.4" cy="736.7" r="9.9" fill="#ef5350" fill-opacity="0.7" stroke="#ef5350" stroke-opacity="1.0" stroke-width="1.1"/>
<circle cx="163.3" cy="715.0" r="10.6" fill="#ef5350" fill-opacity="0.7" stroke="#ef5350" stroke-opacity="1.0" stroke-width="1.1"/>
<circle cx="168.5" cy="711.4" r="9.5" fill="#ef5350" fill-opacity="0.7" stroke="#ef5350" stroke-opacity="1.0" stroke-width="1.1"/>
<circle cx="365.9" cy="731.5" r="9.9" fill="#ef5350" fill-opacity="0.7" stroke="#ef5350" stroke-opacity="1.0" stroke-width="1.1"/>
<circle cx="584.1" cy="736.7" r="9.9" fill="#ef5350" fill-opacity="0.7" stroke="#ef5350" stroke-opacity="1.0" stroke-width="1.1"/>
<circle cx="659.0" cy="732.6" r="9.9" fill="#ef5350" fill-opacity="0.7" stroke="#ef5350" stroke-opacity="1.0" stroke-width="1.1"/>
<circle cx="493.5" cy="738.3" r="9.9" fill="#ef5350" fill-opacity="0.7" stroke="#ef5350" stroke-opacity="1.0" stroke-width="1.1"/>
<circle cx="811.0" cy="635.4" r="10.2" fill="#ba68c8" fill-opacity="0.7" stroke="#ba68c8" stroke-opacity="1.0" stroke-width="1.1"/>
<circle cx="1083.5" cy="680.7" r="10.2" fill="#ba68c8" fill-opacity="0.7" stroke="#ba68c8" stroke-opacity="1.0" stroke-width="1.1"/>
<circle cx="1083.5" cy="709.2" r="10.2" fill="#ba68c8" fill-opacity="0.7" stroke="#ba68c8" stroke-opacity="1.0" stroke-width="1.1"/>
<circle cx="784.1" cy="725.2" r="10.2" fill="#ba68c8" fill-opacity="0.7" stroke="#ba68c8" stroke-opacity="1.0" stroke-width="1.1"/>
<circle cx="1182.9" cy="718.6" r="10.2" fill="#ba68c8" fill-opacity="0.7" stroke="#ba68c8" stroke-opacity="1.0" stroke-width="1.1"/>
<circle cx="874.3" cy="274.6" r="12.4" fill="#ba68c8" fill-opacity="0.7" stroke="#ba68c8" stroke-opacity="1.0" stroke-width="1.1"/>
<circle cx="1200.9" cy="274.6" r="12.4" fill="#ba68c8" fill-opacity="0.7" stroke="#ba68c8" stroke-opacity="1.0" stroke-width="1.1"/>
<circle cx="547.8" cy="274.6" r="12.4" fill="#ba68c8" fill-opacity="0.7" stroke="#ba68c8" stroke-opacity="1.0" stroke-width="1.1"/>
<rect x="121.30" y="985.75" width="15" height="8.45" fill="#bdbdbd"/>
<rect x="121.30" y="973.07" width="15" height="12.68" fill="#ffa726"/>
<rect x="121.30" y="960.38" width="15" height="12.68" fill="#ef5350"/>
<rect x="143.05" y="968.84" width="15" height="25.36" fill="#bdbdbd"/>
<rect x="143.05" y="964.61" width="15" height="4.23" fill="#7986cb"/>
<rect x="143.05" y="901.21" width="15" height="63.41" fill="#ffa726"/>
<rect x="143.05" y="871.62" width="15" height="29.59" fill="#ef5350"/>
<rect x="164.80" y="981.52" width="15" height="12.68" fill="#bdbdbd"/>
<rect x="164.80" y="977.29" width="15" height="4.23" fill="#7986cb"/>
<rect x="164.80" y="926.57" width="15" height="50.72" fill="#ffa726"/>
<rect x="164.80" y="875.84" width="15" height="50.72" fill="#ef5350"/>
<rect x="186.55" y="981.52" width="15" height="12.68" fill="#ef5350"/>
<rect x="208.30" y="989.97" width="15" height="4.23" fill="#bdbdbd"/>
<rect x="208.30" y="981.52" width="15" height="8.45" fill="#7986cb"/>
<rect x="208.30" y="956.16" width="15" height="25.36" fill="#ef5350"/>
<rect x="230.05" y="989.97" width="15" height="4.23" fill="#bdbdbd"/>
<rect x="230.05" y="985.75" width="15" height="4.23" fill="#ffa726"/>
<rect x="230.05" y="968.84" width="15" height="16.91" fill="#ef5350"/>
<rect x="251.80" y="985.75" width="15" height="8.45" fill="#7986cb"/>
<rect x="251.80" y="960.38" width="15" height="25.36" fill="#ef5350"/>
<rect x="273.55" y="989.97" width="15" height="4.23" fill="#7986cb"/>
<rect x="273.55" y="973.07" width="15" height="16.91" fill="#ef5350"/>
<rect x="295.30" y="981.52" width="15" height="12.68" fill="#ef5350"/>
<rect x="317.05" y="968.84" width="15" height="25.36" fill="#bdbdbd"/>
<rect x="317.05" y="939.25" width="15" height="29.59" fill="#ef5350"/>
<rect x="338.80" y="964.61" width="15" height="29.59" fill="#bdbdbd"/>
<rect x="338.80" y="960.38" width="15" height="4.23" fill="#7986cb"/>
<rect x="338.80" y="947.70" width="15" height="12.68" fill="#ef5350"/>
<rect x="360.55" y="981.52" width="15" height="12.68" fill="#bdbdbd"/>
<rect x="360.55" y="977.29" width="15" height="4.23" fill="#7986cb"/>
<rect x="360.55" y="956.16" width="15" height="21.14" fill="#ef5350"/>
<rect x="382.30" y="973.07" width="15" height="21.14" fill="#bdbdbd"/>
<rect x="382.30" y="951.93" width="15" height="21.14" fill="#ef5350"/>
<rect x="404.05" y="981.52" width="15" height="12.68" fill="#bdbdbd"/>
<rect x="404.05" y="968.84" width="15" height="12.68" fill="#ef5350"/>
<rect x="425.80" y="981.52" width="15" height="12.68" fill="#bdbdbd"/>
<rect x="425.80" y="977.29" width="15" height="4.23" fill="#7986cb"/>
<rect x="425.80" y="930.80" width="15" height="46.50" fill="#ef5350"/>
<rect x="447.55" y="985.75" width="15" height="8.45" fill="#bdbdbd"/>
<rect x="447.55" y="981.52" width="15" height="4.23" fill="#7986cb"/>
<rect x="447.55" y="973.07" width="15" height="8.45" fill="#ef5350"/>
<rect x="469.30" y="981.52" width="15" height="12.68" fill="#bdbdbd"/>
<rect x="469.30" y="973.07" width="15" height="8.45" fill="#7986cb"/>
<rect x="469.30" y="968.84" width="15" height="4.23" fill="#ef5350"/>
<rect x="491.05" y="981.52" width="15" height="12.68" fill="#bdbdbd"/>
<rect x="491.05" y="960.38" width="15" height="21.14" fill="#ef5350"/>
<rect x="512.80" y="989.97" width="15" height="4.23" fill="#bdbdbd"/>
<rect x="512.80" y="985.75" width="15" height="4.23" fill="#7986cb"/>
<rect x="512.80" y="964.61" width="15" height="21.14" fill="#ef5350"/>
<rect x="534.55" y="977.29" width="15" height="16.91" fill="#bdbdbd"/>
<rect x="534.55" y="973.07" width="15" height="4.23" fill="#7986cb"/>
<rect x="534.55" y="947.70" width="15" height="25.36" fill="#ef5350"/>
<rect x="534.55" y="943.48" width="15" height="4.23" fill="#ba68c8"/>
<rect x="556.30" y="989.97" width="15" height="4.23" fill="#bdbdbd"/>
<rect x="556.30" y="981.52" width="15" height="8.45" fill="#ef5350"/>
<rect x="556.30" y="977.29" width="15" height="4.23" fill="#ba68c8"/>
<rect x="578.05" y="989.97" width="15" height="4.23" fill="#bdbdbd"/>
<rect x="578.05" y="981.52" width="15" height="8.45" fill="#ef5350"/>
<rect x="599.80" y="989.97" width="15" height="4.23" fill="#bdbdbd"/>
<rect x="599.80" y="981.52" width="15" height="8.45" fill="#7986cb"/>
<rect x="599.80" y="964.61" width="15" height="16.91" fill="#ef5350"/>
<rect x="621.55" y="973.07" width="15" height="21.14" fill="#bdbdbd"/>
<rect x="621.55" y="968.84" width="15" height="4.23" fill="#7986cb"/>
<rect x="621.55" y="956.16" width="15" height="12.68" fill="#ef5350"/>
<rect x="643.30" y="977.29" width="15" height="16.91" fill="#bdbdbd"/>
<rect x="643.30" y="973.07" width="15" height="4.23" fill="#7986cb"/>
<rect x="643.30" y="939.25" width="15" height="33.82" fill="#ef5350"/>
<rect x="665.05" y="981.52" width="15" height="12.68" fill="#ef5350"/>
<rect x="686.80" y="977.29" width="15" height="16.91" fill="#ef5350"/>
<rect x="708.55" y="989.97" width="15" height="4.23" fill="#7986cb"/>
<rect x="708.55" y="968.84" width="15" height="21.14" fill="#ef5350"/>
<rect x="730.30" y="989.97" width="15" height="4.23" fill="#7986cb"/>
<rect x="730.30" y="985.75" width="15" height="4.23" fill="#ef5350"/>
<rect x="752.05" y="981.52" width="15" height="12.68" fill="#bdbdbd"/>
<rect x="752.05" y="977.29" width="15" height="4.23" fill="#7986cb"/>
<rect x="752.05" y="964.61" width="15" height="12.68" fill="#ef5350"/>
<rect x="773.80" y="989.97" width="15" height="4.23" fill="#bdbdbd"/>
<rect x="773.80" y="977.29" width="15" height="12.68" fill="#ffa726"/>
<rect x="773.80" y="968.84" width="15" height="8.45" fill="#ef5350"/>
<rect x="773.80" y="964.61" width="15" height="4.23" fill="#ba68c8"/>
<rect x="795.55" y="989.97" width="15" height="4.23" fill="#bdbdbd"/>
<rect x="795.55" y="922.34" width="15" height="67.63" fill="#ffa726"/>
<rect x="795.55" y="884.30" width="15" height="38.04" fill="#ef5350"/>
<rect x="795.55" y="880.07" width="15" height="4.23" fill="#ba68c8"/>
<rect x="817.30" y="935.02" width="15" height="59.18" fill="#ffa726"/>
<rect x="817.30" y="892.75" width="15" height="42.27" fill="#ef5350"/>
<rect x="817.30" y="888.53" width="15" height="4.23" fill="#ba68c8"/>
<rect x="839.05" y="989.97" width="15" height="4.23" fill="#ffa726"/>
<rect x="839.05" y="973.07" width="15" height="16.91" fill="#ef5350"/>
<rect x="860.80" y="989.97" width="15" height="4.23" fill="#bdbdbd"/>
<rect x="860.80" y="981.52" width="15" height="8.45" fill="#7986cb"/>
<rect x="860.80" y="977.29" width="15" height="4.23" fill="#ef5350"/>
<rect x="860.80" y="973.07" width="15" height="4.23" fill="#ba68c8"/>
<rect x="882.55" y="989.97" width="15" height="4.23" fill="#bdbdbd"/>
<rect x="882.55" y="977.29" width="15" height="12.68" fill="#ef5350"/>
<rect x="882.55" y="973.07" width="15" height="4.23" fill="#ba68c8"/>
<rect x="904.30" y="973.07" width="15" height="21.14" fill="#ef5350"/>
<rect x="926.05" y="989.97" width="15" height="4.23" fill="#bdbdbd"/>
<rect x="926.05" y="985.75" width="15" height="4.23" fill="#7986cb"/>
<rect x="926.05" y="960.38" width="15" height="25.36" fill="#ef5350"/>
<rect x="947.80" y="989.97" width="15" height="4.23" fill="#bdbdbd"/>
<rect x="947.80" y="985.75" width="15" height="4.23" fill="#7986cb"/>
<rect x="947.80" y="973.07" width="15" height="12.68" fill="#ef5350"/>
<rect x="969.55" y="989.97" width="15" height="4.23" fill="#7986cb"/>
<rect x="969.55" y="977.29" width="15" height="12.68" fill="#ef5350"/>
<rect x="991.30" y="985.75" width="15" height="8.45" fill="#7986cb"/>
<rect x="991.30" y="977.29" width="15" height="8.45" fill="#ef5350"/>
<rect x="1013.05" y="989.97" width="15" height="4.23" fill="#bdbdbd"/>
<rect x="1013.05" y="981.52" width="15" height="8.45" fill="#7986cb"/>
<rect x="1013.05" y="973.07" width="15" height="8.45" fill="#ef5350"/>
<rect x="1034.80" y="989.97" width="15" height="4.23" fill="#bdbdbd"/>
<rect x="1034.80" y="985.75" width="15" height="4.23" fill="#7986cb"/>
<rect x="1034.80" y="977.29" width="15" height="8.45" fill="#ef5350"/>
<rect x="1056.55" y="981.52" width="15" height="12.68" fill="#ef5350"/>
<rect x="1078.30" y="985.75" width="15" height="8.45" fill="#7986cb"/>
<rect x="1078.30" y="951.93" width="15" height="33.82" fill="#ef5350"/>
<rect x="1078.30" y="943.48" width="15" height="8.45" fill="#ba68c8"/>
<rect x="1100.05" y="981.52" width="15" height="12.68" fill="#7986cb"/>
<rect x="1100.05" y="968.84" width="15" height="12.68" fill="#ef5350"/>
<rect x="1121.80" y="989.97" width="15" height="4.23" fill="#ffa726"/>
<rect x="1121.80" y="973.07" width="15" height="16.91" fill="#ef5350"/>
<rect x="1143.55" y="989.97" width="15" height="4.23" fill="#ffa726"/>
<rect x="1143.55" y="960.38" width="15" height="29.59" fill="#ef5350"/>
<rect x="1165.30" y="989.97" width="15" height="4.23" fill="#bdbdbd"/>
<rect x="1165.30" y="985.75" width="15" height="4.23" fill="#ef5350"/>
<rect x="1165.30" y="981.52" width="15" height="4.23" fill="#ba68c8"/>
<rect x="1187.05" y="985.75" width="15" height="8.45" fill="#bdbdbd"/>
<rect x="1187.05" y="977.29" width="15" height="8.45" fill="#ef5350"/>
<rect x="1187.05" y="968.84" width="15" height="8.45" fill="#ba68c8"/>
<rect x="1208.80" y="989.97" width="15" height="4.23" fill="#ef5350"/>
<rect x="1208.80" y="985.75" width="15" height="4.23" fill="#ba68c8"/>
<rect x="1230.55" y="989.97" width="15" height="4.23" fill="#7986cb"/>
<rect x="1230.55" y="981.52" width="15" height="8.45" fill="#ef5350"/>
<rect x="1252.30" y="989.97" width="15" height="4.23" fill="#7986cb"/>
<rect x="1252.30" y="968.84" width="15" height="21.14" fill="#ef5350"/>
<rect x="1274.05" y="981.52" width="15" height="12.68" fill="#ef5350"/>
<rect x="1295.80" y="989.97" width="15" height="4.23" fill="#7986cb"/>
<rect x="1295.80" y="981.52" width="15" height="8.45" fill="#ef5350"/>
<rect x="1317.55" y="989.97" width="15" height="4.23" fill="#7986cb"/>
<rect x="1317.55" y="985.75" width="15" height="4.23" fill="#ef5350"/>
<rect x="1339.30" y="901.21" width="15" height="92.99" fill="#bdbdbd"/>
<rect x="1339.30" y="884.30" width="15" height="16.91" fill="#ef5350"/>
<rect x="1361.05" y="989.97" width="15" height="4.23" fill="#66bb6a"/>
<rect x="1361.05" y="968.84" width="15" height="21.14" fill="#bdbdbd"/>
<rect x="1361.05" y="964.61" width="15" height="4.23" fill="#7986cb"/>
<rect x="1361.05" y="939.25" width="15" height="25.36" fill="#ef5350"/>
<rect x="1382.80" y="985.75" width="15" height="8.45" fill="#7986cb"/>
<rect x="1382.80" y="964.61" width="15" height="21.14" fill="#ef5350"/>
<rect x="1404.55" y="989.97" width="15" height="4.23" fill="#7986cb"/>
<rect x="1404.55" y="985.75" width="15" height="4.23" fill="#ef5350"/>
<path d="M119 871.5V994.2H1424.4" fill="none" stroke="#6284a4" stroke-width="1.6"/>
<path d="M289.0 994.2v7" stroke="#6284a4" stroke-width="1.6"/>
<path d="M506.8 994.2v7" stroke="#6284a4" stroke-width="1.6"/>
<path d="M724.6 994.2v7" stroke="#6284a4" stroke-width="1.6"/>
<path d="M942.4 994.2v7" stroke="#6284a4" stroke-width="1.6"/>
<path d="M1160.2 994.2v7" stroke="#6284a4" stroke-width="1.6"/>
<path d="M1378.0 994.2v7" stroke="#6284a4" stroke-width="1.6"/>
<text x="105.5" y="877.6" text-anchor="end" font-size="17" fill="#5d7f9c">29</text>
<text x="105.5" y="915.7" text-anchor="end" font-size="17" fill="#5d7f9c">20</text>
<text x="105.5" y="957.9" text-anchor="end" font-size="17" fill="#5d7f9c">10</text>
<text x="105.5" y="1000.2" text-anchor="end" font-size="17" fill="#5d7f9c">0</text>
</svg>
<svg class="abs" style="left:0;top:0" width="2186" height="1100" viewBox="0 0 2186 1100">
<circle cx="168.3" cy="198.5" r="12.2" fill="#ba68c8"/>
<path d="M160.7 198.8l5.3 5l9.9-10.4" fill="none" stroke="#fff" stroke-width="2.3" stroke-linecap="round" stroke-linejoin="round"/>
<circle cx="357" cy="198.5" r="12.2" fill="#ef5350"/>
<path d="M349.4 198.8l5.3 5l9.9-10.4" fill="none" stroke="#fff" stroke-width="2.3" stroke-linecap="round" stroke-linejoin="round"/>
<circle cx="483.1" cy="198.5" r="12.2" fill="#ffa726"/>
<path d="M475.5 198.8l5.3 5l9.9-10.4" fill="none" stroke="#fff" stroke-width="2.3" stroke-linecap="round" stroke-linejoin="round"/>
<circle cx="663.5" cy="198.5" r="12.2" fill="#7986cb"/>
<path d="M655.9 198.8l5.3 5l9.9-10.4" fill="none" stroke="#fff" stroke-width="2.3" stroke-linecap="round" stroke-linejoin="round"/>
<circle cx="817" cy="198.5" r="12.2" fill="#42a5f5"/>
<path d="M809.4 198.8l5.3 5l9.9-10.4" fill="none" stroke="#fff" stroke-width="2.3" stroke-linecap="round" stroke-linejoin="round"/>
<circle cx="997.8" cy="198.5" r="12.2" fill="#bdbdbd"/>
<path d="M990.2 198.8l5.3 5l9.9-10.4" fill="none" stroke="#fff" stroke-width="2.3" stroke-linecap="round" stroke-linejoin="round"/>
<circle cx="1122.6" cy="198.5" r="12.2" fill="#66bb6a"/>
<path d="M1115.0 198.8l5.3 5l9.9-10.4" fill="none" stroke="#fff" stroke-width="2.3" stroke-linecap="round" stroke-linejoin="round"/>
<rect x="36.4" y="108.4" width="23" height="23" rx="2.5" fill="#d7ba28"/>
<rect x="39.7" y="112.1" width="4.7" height="4.4" fill="#fffbe8"/><rect x="47.2" y="112.1" width="4.7" height="4.4" fill="#fffbe8"/><rect x="39.7" y="119.3" width="4.7" height="4.4" fill="#fffbe8"/><circle cx="53.1" cy="125.3" r="3" fill="#fffbe8"/>
<ellipse cx="120.4" cy="118" rx="9.6" ry="5.7" fill="none" stroke="#8aa0bc" stroke-width="1.7"/><ellipse cx="121.2" cy="116.7" rx="6.3" ry="5" fill="#8aa0bc"/><path d="M112.2 124.6L128.3 110" stroke="#8aa0bc" stroke-width="1.9" stroke-linecap="round" fill="none"/>
<g fill="#9bb2cc"><path d="M1428.2 116.200h13.800l-1.300 13.900h-11.200z"/><rect x="1426.600" y="112.300" width="17.100" height="1.900"/><rect x="1432.200" y="109.600" width="5.900" height="2.600" rx="0.800"/></g>
<path d="M1472.3 115.200l9.500 9l9.500-9" fill="none" stroke="#9bb2cc" stroke-width="2.400" stroke-linecap="round" stroke-linejoin="round"/>
<circle cx="1408.200" cy="44" r="8.800" fill="none" stroke="#809cbc" stroke-width="2.600"/><path d="M1408.800 38.300v6.600h-4.300" fill="none" stroke="#809cbc" stroke-width="1.800"/>
<g fill="none" stroke="#9bb5d1" stroke-width="2.300"><path d="M1496.400 43.200a8.700 8.700 0 0 1 15.300-4.600"/><path d="M1513.600 44.800a8.700 8.700 0 0 1-15.300 4.600"/></g><path d="M1514.800 34.600v7.400h-7.400z" fill="#9bb5d1"/><path d="M1495.200 53.400v-7.400h7.400z" fill="#9bb5d1"/>
<g fill="#7389a3"><circle cx="1375.700" cy="204.600" r="7.100"/><circle cx="1386.400" cy="200.100" r="2.500"/><circle cx="1384.300" cy="213.700" r="4.400"/><circle cx="1371.600" cy="214.800" r="3.100"/></g>
<g fill="#7b93b0"><rect x="1413.600" y="198" width="14.400" height="4.200"/><rect x="1413.600" y="205.900" width="19.600" height="4.200"/><rect x="1413.600" y="213.700" width="9.600" height="4.200"/></g>
<g fill="none" stroke="#8fa9c6"><circle cx="1479.800" cy="205.900" r="6.600" stroke-width="2.400"/><path d="M1484.600 210.700l5.800 5.800" stroke-width="2.600" stroke-linecap="round"/><path d="M1477 205.900h5.600" stroke-width="1.800"/></g>
</svg>
<div class="t" style="top:23.07px;font-size:35px;line-height:46px;color:#353e4f;letter-spacing:0.000px;transform:scaleX(0.9357);transform-origin:0 50%;left:25.60px;">Root Cause Explorer</div>
<div class="t" style="top:30.84px;font-size:19.8px;line-height:26px;color:#587a9c;letter-spacing:0.535px;-webkit-text-stroke:0.35px currentColor;left:1427.90px;">-24h</div>
<div class="t" style="top:106.07px;font-size:20.0px;line-height:26px;color:#232b3b;letter-spacing:-0.033px;left:141.60px;">Kubernetes</div>
<div class="t" style="top:184.43px;font-size:20.4px;line-height:27px;color:#1d2433;letter-spacing:0.445px;-webkit-text-stroke:0.5px currentColor;left:197.10px;">Throughput</div>
<div class="t" style="top:184.43px;font-size:20.4px;line-height:27px;color:#1d2433;letter-spacing:0.372px;-webkit-text-stroke:0.5px currentColor;left:384.80px;">Error</div>
<div class="t" style="top:184.43px;font-size:20.4px;line-height:27px;color:#1d2433;letter-spacing:0.642px;-webkit-text-stroke:0.5px currentColor;left:511.30px;">Bottleneck</div>
<div class="t" style="top:184.43px;font-size:20.4px;line-height:27px;color:#1d2433;letter-spacing:0.413px;-webkit-text-stroke:0.5px currentColor;left:691.70px;">Latency</div>
<div class="t" style="top:184.43px;font-size:20.4px;line-height:27px;color:#1d2433;letter-spacing:0.421px;-webkit-text-stroke:0.5px currentColor;left:845.20px;">Availability</div>
<div class="t" style="top:184.43px;font-size:20.4px;line-height:27px;color:#1d2433;letter-spacing:0.142px;-webkit-text-stroke:0.5px currentColor;left:1025.20px;">Load</div>
<div class="t" style="top:184.43px;font-size:20.4px;line-height:27px;color:#1d2433;letter-spacing:-0.027px;-webkit-text-stroke:0.5px currentColor;left:1150.00px;">Success</div>
<div class="t" style="top:236.19px;font-size:23.4px;line-height:30px;color:#1d2433;letter-spacing:0.088px;-webkit-text-stroke:0.6px currentColor;left:117.80px;">Events of Interest: Drift and Duration by Time</div>
<div class="t" style="top:833.89px;font-size:23.4px;line-height:30px;color:#1d2433;letter-spacing:-0.013px;-webkit-text-stroke:0.6px currentColor;left:118.30px;">Events of Interest: Count by Time</div>
<div class="t" style="top:23.49px;font-size:23.4px;line-height:30px;color:#1d2433;letter-spacing:0.240px;-webkit-text-stroke:0.6px currentColor;left:1563.30px;">Top Contributing Entities</div>
<div class="t" style="top:75.94px;font-size:19.5px;line-height:25px;color:#1d2433;letter-spacing:0.257px;left:1563.10px;">The following entities are likely correlated with root</div>
<div class="t" style="top:106.64px;font-size:19.5px;line-height:25px;color:#1d2433;letter-spacing:0.241px;left:1563.10px;">cause based on start time and duration of events of</div>
<div class="t" style="top:137.34px;font-size:19.5px;line-height:25px;color:#1d2433;letter-spacing:0.203px;left:1563.10px;">interest. For best results, change the time range to</div>
<div class="t" style="top:167.84px;font-size:19.5px;line-height:25px;color:#1d2433;letter-spacing:0.247px;left:1563.10px;">match the incident under investigation.</div>
<div class="t" style="top:245.20px;font-size:20.2px;line-height:26px;color:#1d2433;letter-spacing:0.437px;-webkit-text-stroke:0.35px currentColor;left:1604.10px;">Throughput</div>
<div class="t" style="top:684.20px;font-size:20.2px;line-height:26px;color:#1d2433;letter-spacing:0.156px;-webkit-text-stroke:0.35px currentColor;left:1604.00px;">Error</div>
<div class="t" style="top:291.09px;font-size:20.8px;line-height:27px;color:#262e3e;letter-spacing:-0.302px;left:1609.50px;">mysql-2</div>
<div class="t" style="top:325.91px;font-size:17.3px;line-height:22px;color:#668cae;letter-spacing:-0.473px;left:1609.20px;">RDS Node</div>
<div class="t" style="top:325.91px;font-size:17.3px;line-height:22px;color:#668cae;letter-spacing:0.130px;right:152.37px;">06/29, 12:30 AM</div>
<div class="t" style="top:366.74px;font-size:20.8px;line-height:27px;color:#262e3e;letter-spacing:-0.065px;left:1609.50px;">a9e830d3a680a495db5dd6f8ea8d9e40(us-...</div>
<div class="t" style="top:401.56px;font-size:17.3px;line-height:22px;color:#668cae;letter-spacing:-0.202px;left:1609.20px;">Load Balancer in AZ</div>
<div class="t" style="top:401.56px;font-size:17.3px;line-height:22px;color:#668cae;letter-spacing:0.337px;right:152.16px;">06/29, 05:00 AM</div>
<div class="t" style="top:442.39px;font-size:20.8px;line-height:27px;color:#262e3e;letter-spacing:-0.317px;left:1609.50px;">a19cda9dd54004fabaa1e96abf81bfa4(us-ea...</div>
<div class="t" style="top:477.21px;font-size:17.3px;line-height:22px;color:#668cae;letter-spacing:-0.202px;left:1609.20px;">Load Balancer in AZ</div>
<div class="t" style="top:477.21px;font-size:17.3px;line-height:22px;color:#668cae;letter-spacing:0.152px;right:152.35px;">06/29, 10:30 AM</div>
<div class="t" style="top:518.04px;font-size:20.8px;line-height:27px;color:#262e3e;letter-spacing:0.050px;left:1609.50px;">a9e830d3a680a495db5dd6f8ea8d9e40</div>
<div class="t" style="top:552.86px;font-size:17.3px;line-height:22px;color:#668cae;letter-spacing:-0.179px;left:1609.20px;">Load Balancer</div>
<div class="t" style="top:552.86px;font-size:17.3px;line-height:22px;color:#668cae;letter-spacing:0.152px;right:152.35px;">06/29, 10:30 AM</div>
<div class="t" style="top:593.69px;font-size:20.8px;line-height:27px;color:#262e3e;letter-spacing:0.053px;left:1609.50px;">aebc9ff4ce92641d0bb656e203d0b5f6</div>
<div class="t" style="top:628.51px;font-size:17.3px;line-height:22px;color:#668cae;letter-spacing:-0.179px;left:1609.20px;">Load Balancer</div>
<div class="t" style="top:628.51px;font-size:17.3px;line-height:22px;color:#668cae;letter-spacing:0.084px;right:152.42px;">06/29, 12:20 PM</div>
<div class="abs" style="left:0;top:0;width:2186px;height:1004px;overflow:hidden"><div class="t" style="top:730.59px;font-size:20.8px;line-height:27px;color:#262e3e;letter-spacing:-0.033px;left:1609.50px;">after_parent_attach(crosstab)</div>
<div class="t" style="top:765.41px;font-size:17.3px;line-height:22px;color:#668cae;letter-spacing:-0.273px;left:1609.20px;">Lambda Resource</div>
<div class="t" style="top:765.41px;font-size:17.3px;line-height:22px;color:#668cae;letter-spacing:0.269px;right:152.23px;">06/28, 06:00 PM</div>
<div class="t" style="top:806.24px;font-size:20.8px;line-height:27px;color:#262e3e;letter-spacing:-0.134px;left:1609.50px;">before_drop(after_cursor_execute)</div>
<div class="t" style="top:841.06px;font-size:17.3px;line-height:22px;color:#668cae;letter-spacing:-0.273px;left:1609.20px;">Lambda Resource</div>
<div class="t" style="top:841.06px;font-size:17.3px;line-height:22px;color:#668cae;letter-spacing:0.119px;right:152.38px;">06/28, 08:10 PM</div>
<div class="t" style="top:881.89px;font-size:20.8px;line-height:27px;color:#262e3e;letter-spacing:-0.410px;left:1609.50px;">release(engine_disposed)</div>
<div class="t" style="top:916.71px;font-size:17.3px;line-height:22px;color:#668cae;letter-spacing:-0.273px;left:1609.20px;">Lambda Resource</div>
<div class="t" style="top:916.71px;font-size:17.3px;line-height:22px;color:#668cae;letter-spacing:0.269px;right:152.23px;">06/28, 09:20 PM</div>
<div class="t" style="top:957.54px;font-size:20.8px;line-height:27px;color:#262e3e;letter-spacing:-0.201px;left:1609.50px;">before_cursor_execute(column_reflect)</div>
<div class="t" style="top:992.36px;font-size:17.3px;line-height:22px;color:#668cae;letter-spacing:-0.273px;left:1609.20px;">Lambda Resource</div>
<div class="t" style="top:992.36px;font-size:17.3px;line-height:22px;color:#668cae;letter-spacing:0.269px;right:152.23px;">06/28, 09:50 PM</div></div>
<div class="abs" style="left:1540px;top:1003.5px;width:525px;height:1.5px;background:#e9edf2"></div>
<div class="abs" style="left:1742.4px;top:1023px;width:146.3px;height:52.2px;background:#2160d8"></div>
<div class="t" style="top:1035.93px;font-size:20.4px;line-height:27px;color:#f2f5fd;letter-spacing:-0.157px;-webkit-text-stroke:0.3px currentColor;left:1760.10px;">Apply Filters</div>
</div>
</body></html>
